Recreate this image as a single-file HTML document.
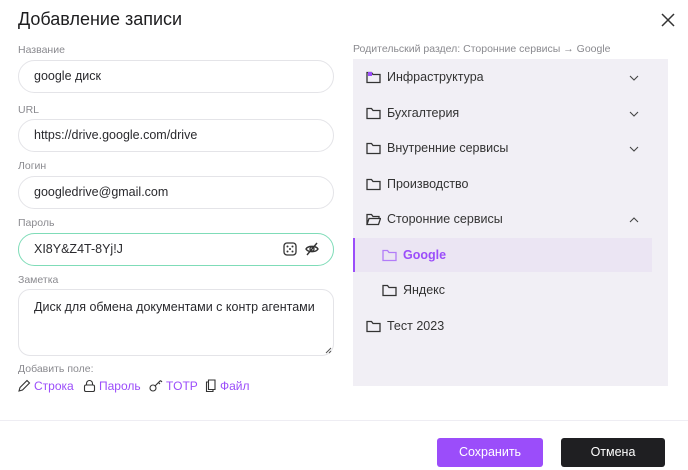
<!DOCTYPE html>
<html><head><meta charset="utf-8"><style>
*{box-sizing:border-box;margin:0;padding:0}
body{width:688px;height:470px;background:#fff;font-family:"Liberation Sans",sans-serif;color:#222;position:relative;overflow:hidden}
.a{position:absolute}
.t{left:18px;top:9px;font-size:18px;color:#1d1d1f}
.lbl{font-size:10.5px;color:#8a8a8f;left:18px}
.in{left:18px;width:316px;height:33px;border:1px solid #e4e4e8;border-radius:17px;font-size:12.5px;padding:0 0 0 15px;line-height:31px;color:#2a2a2e}
.panel{left:353px;top:59px;width:315px;height:327px;background:#f1eff5}
.row{left:353px;height:35px;width:300px;font-size:12.5px;color:#333;line-height:35px}
.row svg{position:absolute;top:11px}
.row svg.ch{left:276px;top:15px}
.lnk{top:379px;font-size:12px;color:#9b4dfa}
.lnk svg{vertical-align:-2px;margin-right:3px}
.btn{top:438px;height:29px;border-radius:3px;color:#fff;font-size:12.5px;text-align:center;line-height:29px}
</style></head><body>
<div class="a t">Добавление записи</div>
<svg class="a" style="left:661px;top:13px" width="14" height="14" viewBox="0 0 14 14"><path d="M1 1L13 13M13 1L1 13" stroke="#333" stroke-width="1.5"/></svg>

<div class="a lbl" style="top:44px">Название</div>
<div class="a in" style="top:60px">google диск</div>
<div class="a lbl" style="top:104px">URL</div>
<div class="a in" style="top:119px">https://drive.google.com/drive</div>
<div class="a lbl" style="top:160px">Логин</div>
<div class="a in" style="top:176px">googledrive@gmail.com</div>
<div class="a lbl" style="top:217px">Пароль</div>
<div class="a in" style="top:233px;border-color:#7fdcb8">XI8Y&amp;Z4T-8Yj!J</div>
<svg class="a" style="left:283px;top:242px" width="14" height="14" viewBox="0 0 14 14"><rect x="1" y="1" width="12" height="12" rx="3" fill="none" stroke="#333" stroke-width="1.3"/><circle cx="4.5" cy="4.5" r="1" fill="#333"/><circle cx="9.5" cy="4.5" r="1" fill="#333"/><circle cx="7" cy="7" r="1" fill="#333"/><circle cx="4.5" cy="9.5" r="1" fill="#333"/><circle cx="9.5" cy="9.5" r="1" fill="#333"/></svg>
<svg class="a" style="left:305px;top:242px" width="14" height="14" viewBox="0 0 14 14"><path d="M1 7C3 3.5 11 3.5 13 7C11 10.5 3 10.5 1 7Z" fill="none" stroke="#333" stroke-width="1.4"/><circle cx="7" cy="7" r="2" fill="none" stroke="#333" stroke-width="1.3"/><path d="M2 13L12 1" stroke="#333" stroke-width="1.4"/></svg>
<div class="a lbl" style="top:274px">Заметка</div>
<div class="a in" style="top:289px;height:67px;border-radius:12px;line-height:16px;padding-top:9px">Диск для обмена документами с контр агентами</div>
<svg class="a" style="left:325px;top:347px" width="7" height="7" viewBox="0 0 7 7"><path d="M6 1L1 6M6 4L4 6" stroke="#555" stroke-width="1"/></svg>
<div class="a lbl" style="top:363px">Добавить поле:</div>
<div class="a lnk" style="left:18px"><svg width="13" height="13" viewBox="0 0 13 13"><path d="M1 12L2 8.5L9 1.5L11.5 4L4.5 11Z M1 12L4.5 11" fill="none" stroke="#333" stroke-width="1.1"/></svg>Строка</div>
<div class="a lnk" style="left:83px"><svg width="13" height="13" viewBox="0 0 13 13"><rect x="1.5" y="6" width="10" height="6.5" rx="1.5" fill="none" stroke="#333" stroke-width="1.1"/><path d="M3.5 6V4.5a3 3 0 0 1 6 0V6" fill="none" stroke="#333" stroke-width="1.1"/></svg>Пароль</div>
<div class="a lnk" style="left:149px"><svg width="14" height="13" viewBox="0 0 14 13"><circle cx="4" cy="9" r="3" fill="none" stroke="#333" stroke-width="1.1"/><path d="M6 7L11.5 1.5M9.5 3.5L11 5M11.5 1.5L13 3" fill="none" stroke="#333" stroke-width="1.1"/></svg>TOTP</div>
<div class="a lnk" style="left:205px"><svg width="12" height="13" viewBox="0 0 12 13"><path d="M3.5 1H10V10.5H3.5ZM3.5 3H1.5V12.5H8V10.5" fill="none" stroke="#333" stroke-width="1.1"/></svg>Файл</div>

<div class="a lbl" style="left:353px;top:43px;color:#8a8a8f">Родительский раздел: Сторонние сервисы → Google</div>
<div class="a panel"></div>
<div class="a" style="left:353px;top:238px;width:299px;height:34px;background:#ebe5f3;border-left:2px solid #9b4dfa"></div>

<div class="a row" style="top:60px;padding-left:34px"><svg style="left:13px" width="15" height="13" viewBox="0 0 15 13"><path d="M1 2.5V11.5H14V3.5H7L5.5 1.5H1Z" fill="none" stroke="#333" stroke-width="1.3"/><rect x="2" y="1" width="4" height="4" fill="#9b4dfa"/></svg>Инфраструктура<svg class="ch" width="10" height="6" viewBox="0 0 10 6"><path d="M1 1L5 5L9 1" fill="none" stroke="#444" stroke-width="1.1"/></svg></div>
<div class="a row" style="top:96px;padding-left:34px"><svg style="left:13px" width="15" height="13" viewBox="0 0 15 13"><path d="M1 1.5V11.5H14V3.5H7L5.5 1.5Z" fill="none" stroke="#333" stroke-width="1.3"/></svg>Бухгалтерия<svg class="ch" width="10" height="6" viewBox="0 0 10 6"><path d="M1 1L5 5L9 1" fill="none" stroke="#444" stroke-width="1.1"/></svg></div>
<div class="a row" style="top:131px;padding-left:34px"><svg style="left:13px" width="15" height="13" viewBox="0 0 15 13"><path d="M1 1.5V11.5H14V3.5H7L5.5 1.5Z" fill="none" stroke="#333" stroke-width="1.3"/></svg>Внутренние сервисы<svg class="ch" width="10" height="6" viewBox="0 0 10 6"><path d="M1 1L5 5L9 1" fill="none" stroke="#444" stroke-width="1.1"/></svg></div>
<div class="a row" style="top:167px;padding-left:34px"><svg style="left:13px" width="15" height="13" viewBox="0 0 15 13"><path d="M1 1.5V11.5H14V3.5H7L5.5 1.5Z" fill="none" stroke="#333" stroke-width="1.3"/></svg>Производство</div>
<div class="a row" style="top:202px;padding-left:34px"><svg style="left:13px" width="15" height="13" viewBox="0 0 15 13"><path d="M1 11.5V1.5H5.5L7 3.5H13V5.5M1 11.5L3 5.5H14.5L12.5 11.5Z" fill="none" stroke="#333" stroke-width="1.3"/></svg>Сторонние сервисы<svg class="ch" width="10" height="6" viewBox="0 0 10 6"><path d="M1 5L5 1L9 5" fill="none" stroke="#444" stroke-width="1.1"/></svg></div>
<div class="a row" style="top:238px;padding-left:50px;color:#9b4dfa;font-weight:bold"><svg style="left:29px" width="15" height="13" viewBox="0 0 15 13"><path d="M1 1.5V11.5H14V3.5H7L5.5 1.5Z" fill="none" stroke="#b27cf8" stroke-width="1.3"/></svg>Google</div>
<div class="a row" style="top:273px;padding-left:50px"><svg style="left:29px" width="15" height="13" viewBox="0 0 15 13"><path d="M1 1.5V11.5H14V3.5H7L5.5 1.5Z" fill="none" stroke="#333" stroke-width="1.3"/></svg>Яндекс</div>
<div class="a row" style="top:309px;padding-left:34px"><svg style="left:13px" width="15" height="13" viewBox="0 0 15 13"><path d="M1 1.5V11.5H14V3.5H7L5.5 1.5Z" fill="none" stroke="#333" stroke-width="1.3"/></svg>Тест 2023</div>

<div class="a" style="left:0;top:420px;width:688px;height:1px;background:#eeedf3"></div>
<div class="a btn" style="left:437px;width:106px;background:#9b4dfa">Сохранить</div>
<div class="a btn" style="left:561px;width:104px;background:#1f1f22">Отмена</div>
</body></html>
